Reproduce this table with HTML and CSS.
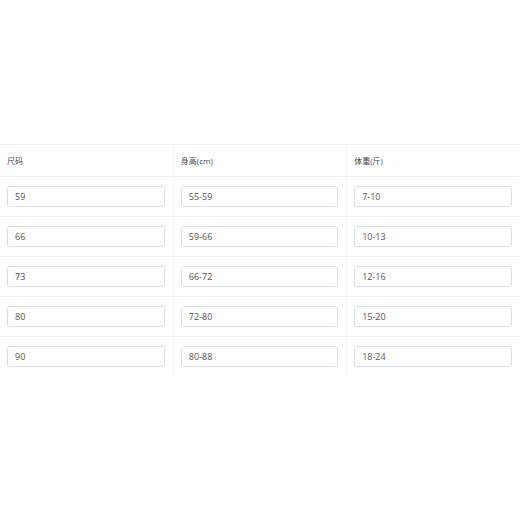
FILE: index.html
```html
<!DOCTYPE html>
<html>
<head>
<meta charset="utf-8">
<link rel="stylesheet" href="styles.css">
</head>
<body>
<div class="page">
  <table class="size-table">
    <thead>
      <tr><th>尺码</th><th>身高(cm)</th><th>体重(斤)</th></tr>
    </thead>
    <tbody>
      <tr><td><div class="field">59</div></td><td><div class="field">55-59</div></td><td><div class="field">7-10</div></td></tr>
      <tr><td><div class="field">66</div></td><td><div class="field">59-66</div></td><td><div class="field">10-13</div></td></tr>
      <tr><td><div class="field">73</div></td><td><div class="field">66-72</div></td><td><div class="field">12-16</div></td></tr>
      <tr><td><div class="field">80</div></td><td><div class="field">72-80</div></td><td><div class="field">15-20</div></td></tr>
      <tr><td><div class="field">90</div></td><td><div class="field">80-88</div></td><td><div class="field">18-24</div></td></tr>
    </tbody>
  </table>
</div>
</body>
</html>
```

FILE: styles.css
```css
html, body {
  margin: 0;
  padding: 0;
  background: #fff;
}
.page {
  padding-top: 144px;
  font-family: "Open Sans", "Noto Sans CJK SC", sans-serif;
}
.size-table {
  width: 520px;
  border-collapse: collapse;
  table-layout: fixed;
}
.size-table th {
  height: 32px;
  padding: 0 7px;
  text-align: left;
  font-weight: normal;
  font-size: 8px;
  color: #444;
  border-top: 1px solid #f0f0f0;
  border-bottom: 1px solid #ebeef5;
  border-right: 1px solid #f2f2f2;
  box-sizing: border-box;
}
.size-table td {
  height: 40px;
  padding: 0 8px 0 7px;
  border-bottom: 1px solid #f0f0f0;
  border-right: 1px solid #f2f2f2;
  box-sizing: border-box;
  vertical-align: middle;
}
.size-table tbody tr:last-child td {
  border-bottom: none;
}
.size-table th:last-child, .size-table td:last-child {
  border-right: none;
}
.field {
  height: 21px;
  box-sizing: border-box;
  border: 1px solid #dcdfe6;
  border-radius: 3px;
  padding: 0 7px;
  font-size: 9px;
  line-height: 19px;
  color: #555;
}
```
